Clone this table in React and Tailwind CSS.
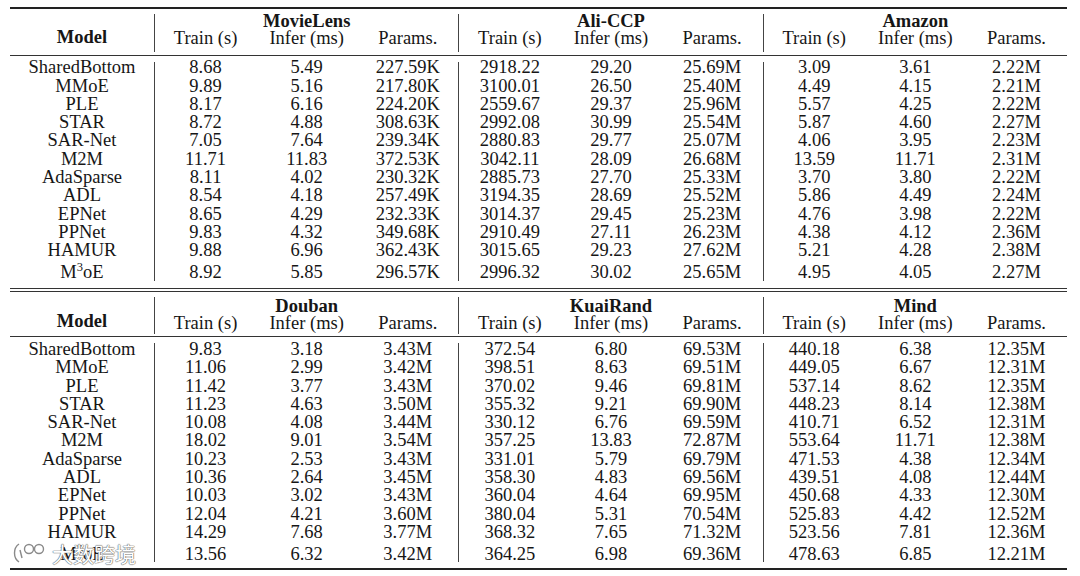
import React from 'react';

const models = [
  'SharedBottom', 'MMoE', 'PLE', 'STAR', 'SAR-Net', 'M2M',
  'AdaSparse', 'ADL', 'EPNet', 'PPNet', 'HAMUR', 'M3oE',
];

const top = [
  {
    name: 'MovieLens',
    rows: [
      '8.68 5.49 227.59K', '9.89 5.16 217.80K', '8.17 6.16 224.20K', '8.72 4.88 308.63K',
      '7.05 7.64 239.34K', '11.71 11.83 372.53K', '8.11 4.02 230.32K', '8.54 4.18 257.49K',
      '8.65 4.29 232.33K', '9.83 4.32 349.68K', '9.88 6.96 362.43K', '8.92 5.85 296.57K',
    ],
  },
  {
    name: 'Ali-CCP',
    rows: [
      '2918.22 29.20 25.69M', '3100.01 26.50 25.40M', '2559.67 29.37 25.96M', '2992.08 30.99 25.54M',
      '2880.83 29.77 25.07M', '3042.11 28.09 26.68M', '2885.73 27.70 25.33M', '3194.35 28.69 25.52M',
      '3014.37 29.45 25.23M', '2910.49 27.11 26.23M', '3015.65 29.23 27.62M', '2996.32 30.02 25.65M',
    ],
  },
  {
    name: 'Amazon',
    rows: [
      '3.09 3.61 2.22M', '4.49 4.15 2.21M', '5.57 4.25 2.22M', '5.87 4.60 2.27M',
      '4.06 3.95 2.23M', '13.59 11.71 2.31M', '3.70 3.80 2.22M', '5.86 4.49 2.24M',
      '4.76 3.98 2.22M', '4.38 4.12 2.36M', '5.21 4.28 2.38M', '4.95 4.05 2.27M',
    ],
  },
];

const bottom = [
  {
    name: 'Douban',
    rows: [
      '9.83 3.18 3.43M', '11.06 2.99 3.42M', '11.42 3.77 3.43M', '11.23 4.63 3.50M',
      '10.08 4.08 3.44M', '18.02 9.01 3.54M', '10.23 2.53 3.43M', '10.36 2.64 3.45M',
      '10.03 3.02 3.43M', '12.04 4.21 3.60M', '14.29 7.68 3.77M', '13.56 6.32 3.42M',
    ],
  },
  {
    name: 'KuaiRand',
    rows: [
      '372.54 6.80 69.53M', '398.51 8.63 69.51M', '370.02 9.46 69.81M', '355.32 9.21 69.90M',
      '330.12 6.76 69.59M', '357.25 13.83 72.87M', '331.01 5.79 69.79M', '358.30 4.83 69.56M',
      '360.04 4.64 69.95M', '380.04 5.31 70.54M', '368.32 7.65 71.32M', '364.25 6.98 69.36M',
    ],
  },
  {
    name: 'Mind',
    rows: [
      '440.18 6.38 12.35M', '449.05 6.67 12.31M', '537.14 8.62 12.35M', '448.23 8.14 12.38M',
      '410.71 6.52 12.31M', '553.64 11.71 12.38M', '471.53 4.38 12.34M', '439.51 4.08 12.44M',
      '450.68 4.33 12.30M', '525.83 4.42 12.52M', '523.56 7.81 12.36M', '478.63 6.85 12.21M',
    ],
  },
];

function ModelName({ name }) {
  if (name !== 'M3oE') return name;
  return (
    <>
      M<span className="relative -top-[7px] text-[12.5px]">3</span>oE
    </>
  );
}

function Header({ sets, namePad, modelPad, sepClass, height }) {
  return (
    <div className={`flex ${height}`}>
      <div className={`w-[144px] shrink-0 text-center font-bold leading-[18px] ${modelPad}`}>Model</div>
      {sets.map((d) => (
        <div key={d.name} className="flex flex-1">
          <div className={`w-px bg-[#444] ${sepClass}`} />
          <div className={`flex-1 ${namePad}`}>
            <div className="h-[16px] leading-[16px] text-center font-bold">{d.name}</div>
            <div className="grid grid-cols-3 leading-[18px] text-center">
              <span>Train (s)</span>
              <span>Infer (ms)</span>
              <span>Params.</span>
            </div>
          </div>
        </div>
      ))}
    </div>
  );
}

function Body({ sets, pad, sepClass, height }) {
  const rowCls = (i) =>
    i === models.length - 1 ? 'mt-[3.3px] h-[18.3px] leading-[18.3px]' : 'h-[18.3px] leading-[18.3px]';
  return (
    <div className={`flex ${height}`}>
      <div className={`w-[144px] shrink-0 text-center ${pad}`}>
        {models.map((m, i) => (
          <div key={m} className={rowCls(i)}>
            <ModelName name={m} />
          </div>
        ))}
      </div>
      {sets.map((d) => (
        <div key={d.name} className="flex flex-1">
          <div className={`w-px bg-[#444] ${sepClass}`} />
          <div className={`flex-1 ${pad}`}>
            {d.rows.map((r, i) => (
              <div key={i} className={`grid grid-cols-3 text-center ${rowCls(i)}`}>
                {r.split(' ').map((v, j) => (
                  <span key={j}>{v}</span>
                ))}
              </div>
            ))}
          </div>
        </div>
      ))}
    </div>
  );
}

// site watermark in the lower left corner of the screenshot
function Watermark() {
  return (
    <div className="absolute left-[10px] top-[541px] flex items-center gap-[6px]">
      <svg width="36" height="24" viewBox="0 0 36 24" fill="none" stroke="#8a8a8a" strokeWidth="1.4">
        <path d="M9 3 C3 7 3 17 9 21" stroke="#fff" strokeWidth="4" />
        <path d="M9 3 C3 7 3 17 9 21" />
        <path d="M10 9 L12 17" />
        <circle cx="19" cy="8" r="4.5" fill="#fff" />
        <circle cx="29" cy="8" r="4.5" fill="#fff" />
      </svg>
      <span className="font-['Noto_Sans_CJK_SC',sans-serif] text-[21px] leading-none text-white [text-shadow:0_0_1px_#666,0_0_1px_#666,0_0_1px_#666]">
        大数跨境
      </span>
    </div>
  );
}

export default function App() {
  return (
    <div className="relative w-[1080px] h-[576px] overflow-hidden bg-white text-[#161616] font-['Liberation_Serif','Times_New_Roman',serif] text-[18.5px]">
      <div className="w-[1067px] pl-[10px] pt-[7px]">
        <div className="h-[2px] bg-[#222]" />
        <Header
          sets={top}
          height="h-[46px]"
          namePad="pt-[3.5px]"
          modelPad="pt-[19px]"
          sepClass="mt-[5px] mb-[3px]"
        />
        <div className="h-px bg-[#333]" />
        <Body sets={top} height="h-[232px]" pad="pt-[2.3px]" sepClass="mt-[5.5px] mb-[7px]" />
        <div className="h-px bg-[#333]" />
        <div className="h-[2px]" />
        <div className="h-px bg-[#333]" />
        <Header
          sets={bottom}
          height="h-[44px]"
          namePad="pt-[5.5px]"
          modelPad="pt-[20px]"
          sepClass="mt-[5px] mb-[2px]"
        />
        <div className="h-px bg-[#333]" />
        <Body sets={bottom} height="h-[231px]" pad="pt-[3px]" sepClass="mt-[6px] mb-[6px]" />
        <div className="h-[2px] bg-[#222]" />
      </div>
      <Watermark />
    </div>
  );
}
